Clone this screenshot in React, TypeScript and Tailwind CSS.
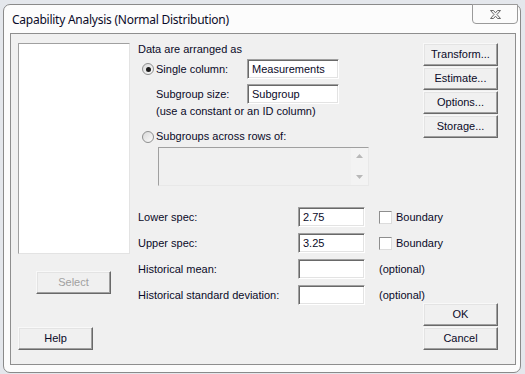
import React from "react";

const raised =
  "bg-[#f0f0f0] border border-t-[#f8f8f8] border-l-[#f8f8f8] border-b-[#696969] border-r-[#696969] shadow-[inset_-1px_-1px_0_#a0a0a0,inset_1px_1px_0_#e3e3e3]";
const sunken =
  "border border-t-[#a0a0a0] border-l-[#a0a0a0] border-b-white border-r-white shadow-[inset_1px_1px_0_#696969,inset_-1px_-1px_0_#e3e3e3]";

function Btn({ label, disabled, cls }: { label: string; disabled?: boolean; cls?: string }) {
  return (
    <div
      className={`${raised} shrink-0 w-[75px] h-[23px] flex items-center justify-center ${
        disabled ? "text-[#a0a0a0]" : "text-[#0a0a28]"
      } ${cls ?? ""}`}
    >
      {label}
    </div>
  );
}

function Input({ value, w }: { value?: string; w: string }) {
  return (
    <div className={`${sunken} shrink-0 bg-white h-[20px] ${w} flex items-center pl-[4px] text-[#0a0a28]`}>
      {value}
    </div>
  );
}

function Radio({ checked }: { checked?: boolean }) {
  return (
    <div className="w-[12px] h-[12px] rounded-full border border-[#8e8f8f] bg-gradient-to-br from-[#d9d9d9] to-[#fbfbfb] flex items-center justify-center">
      {checked && <div className="w-[5px] h-[5px] rounded-full bg-[#1a1a1a]" />}
    </div>
  );
}

function Check() {
  return (
    <div className="shrink-0 w-[13px] h-[13px] bg-white border border-t-[#8e8e8e] border-l-[#8e8e8e] border-b-[#dcdcdc] border-r-[#dcdcdc]" />
  );
}

export default function App() {
  return (
    <div className="w-[525px] h-[374px] bg-[#e4e7ec] overflow-hidden pt-[4px] pl-[3px] font-['Liberation_Sans',Arial,sans-serif] text-[11px] leading-[13px]">
      <div className="w-[518px] h-[369px] rounded-[7px] border border-[#8a8a8a] bg-[#fcfcfc] flex flex-col">
        {/* Title bar */}
        <div className="h-[28px] flex items-start">
          <div className="pl-[8px] pt-[8px] text-[12px] leading-[14px] text-[#0a0a28] font-['Noto_Sans',sans-serif] tracking-[-0.25px]">
            Capability Analysis (Normal Distribution)
          </div>
          <div className="ml-auto mr-[2px] -mt-[1px] w-[46px] h-[20px] border border-[#9a9a9a] rounded-b-[4px] bg-[#fbfbfb] flex items-center justify-center">
            <svg width="13" height="11" viewBox="0 0 13 11">
              <path
                d="M1.5 1.5 L4.5 1.5 L6.5 3.8 L8.5 1.5 L11.5 1.5 L8 5.5 L11.5 9.5 L8.5 9.5 L6.5 7.2 L4.5 9.5 L1.5 9.5 L5 5.5 Z"
                fill="#f4f4f4"
                stroke="#6a6a6a"
                strokeWidth="1"
                strokeLinejoin="round"
              />
            </svg>
          </div>
        </div>
        {/* Client area */}
        <div className="ml-[6px] w-[506px] h-[332px] border border-[#8e8e8e] bg-[#f0f0f0] flex pt-[9px] pl-[7px]">
          {/* Column 1 */}
          <div className="w-[112px] shrink-0 flex flex-col">
            <div className="w-[112px] h-[211px] bg-white border border-t-[#a0a0a0] border-l-[#a0a0a0] border-b-[#e3e3e3] border-r-[#e3e3e3]" />
            <Btn label="Select" disabled cls="mt-[17px] ml-[18px]" />
            <Btn label="Help" cls="mt-[33px]" />
          </div>
          {/* Column 2 */}
          <div className="ml-[8px] w-[277px] shrink-0 flex flex-col text-[#0a0a28]">
            <div className="h-[13px] whitespace-nowrap">Data are arranged as</div>
            <div className="mt-[3px] h-[20px] flex items-center">
              <div className="w-[18px] shrink-0 pl-[4px]">
                <Radio checked />
              </div>
              <div className="w-[91px] shrink-0">Single column:</div>
              <Input value="Measurements" w="w-[92px]" />
            </div>
            <div className="mt-[5px] h-[20px] flex items-center">
              <div className="w-[18px] shrink-0" />
              <div className="w-[91px] shrink-0">Subgroup size:</div>
              <Input value="Subgroup" w="w-[92px]" />
            </div>
            <div className="mt-[1px] h-[13px] pl-[18px] whitespace-nowrap">(use a constant or an ID column)</div>
            <div className="mt-[12px] h-[13px] flex items-center">
              <div className="w-[18px] shrink-0 pl-[4px]">
                <Radio />
              </div>
              <div className="whitespace-nowrap">Subgroups across rows of:</div>
            </div>
            <div className="mt-[4px] ml-[20px] w-[211px] h-[39px] border border-t-[#a0a0a0] border-l-[#a0a0a0] border-b-[#e8e8e8] border-r-[#e8e8e8] flex">
              <div className="flex-1" />
              <div className="w-[17px] bg-[#f3f3f3] flex flex-col items-center justify-between py-[6px]">
                <svg width="7" height="4" viewBox="0 0 7 4">
                  <path d="M0 4 L3.5 0 L7 4 Z" fill="#b8b8b8" />
                </svg>
                <svg width="7" height="4" viewBox="0 0 7 4">
                  <path d="M0 0 L3.5 4 L7 0 Z" fill="#b8b8b8" />
                </svg>
              </div>
            </div>
            <div className="mt-[21px] h-[20px] flex items-center whitespace-nowrap">
              <div className="w-[160px] shrink-0">Lower spec:</div>
              <Input value="2.75" w="w-[67px]" />
              <div className="ml-[14px] shrink-0">
                <Check />
              </div>
              <div className="ml-[4px] shrink-0">Boundary</div>
            </div>
            <div className="mt-[6px] h-[20px] flex items-center whitespace-nowrap">
              <div className="w-[160px] shrink-0">Upper spec:</div>
              <Input value="3.25" w="w-[67px]" />
              <div className="ml-[14px] shrink-0">
                <Check />
              </div>
              <div className="ml-[4px] shrink-0">Boundary</div>
            </div>
            <div className="mt-[6px] h-[20px] flex items-center whitespace-nowrap">
              <div className="w-[160px] shrink-0">Historical mean:</div>
              <Input w="w-[67px]" />
              <div className="ml-[14px] shrink-0">(optional)</div>
            </div>
            <div className="mt-[6px] h-[20px] flex items-center whitespace-nowrap">
              <div className="w-[160px] shrink-0">Historical standard deviation:</div>
              <Input w="w-[67px]" />
              <div className="ml-[14px] shrink-0">(optional)</div>
            </div>
          </div>
          {/* Column 3 */}
          <div className="ml-[8px] w-[75px] shrink-0 flex flex-col gap-[1px]">
            <Btn label="Transform..." />
            <Btn label="Estimate..." />
            <Btn label="Options..." />
            <Btn label="Storage..." />
            <Btn label="OK" cls="mt-[164px]" />
            <Btn label="Cancel" />
          </div>
        </div>
      </div>
    </div>
  );
}
